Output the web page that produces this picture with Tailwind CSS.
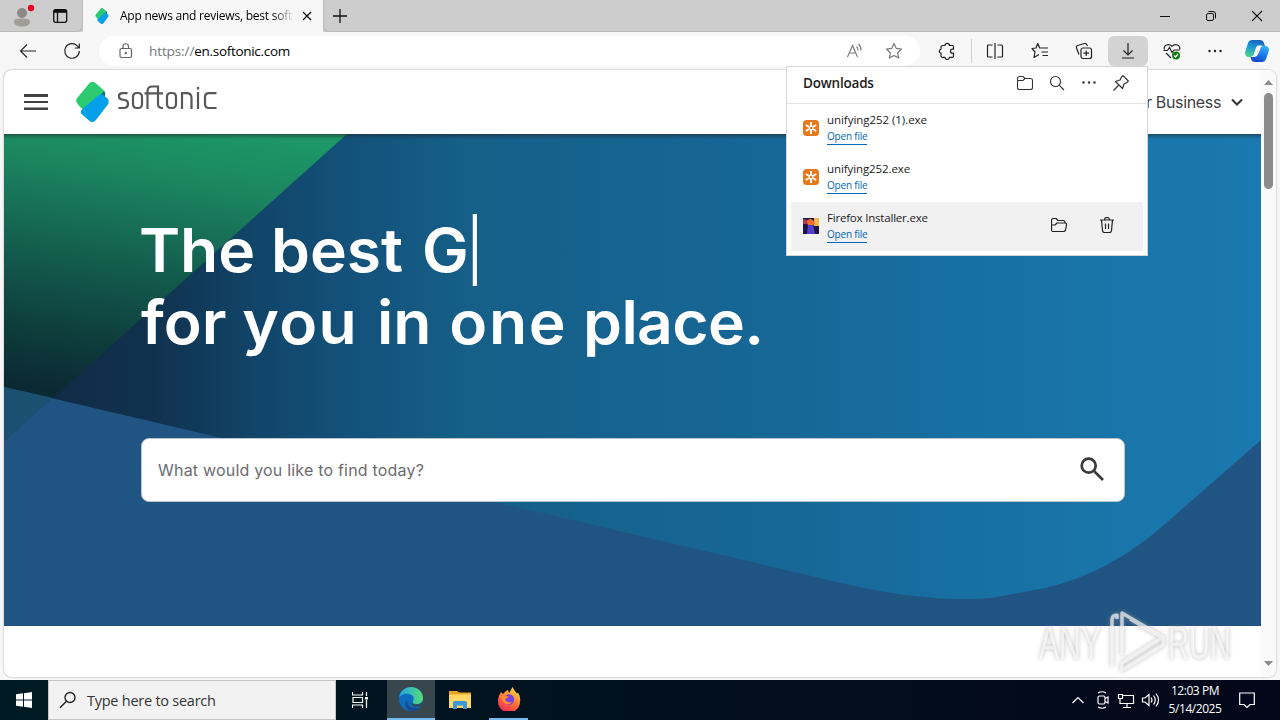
<!DOCTYPE html>
<html lang="en">
<head>
<meta charset="utf-8">
<title>App news and reviews, best software downloads</title>
<script src="https://cdn.jsdelivr.net/npm/@tailwindcss/browser@4"></script>
</head>
<body class="h-[720px] w-[1280px] overflow-hidden bg-[#f7f7f7] font-['Open_Sans',sans-serif] text-[#1b1b1b]">
<div class="relative flex h-[720px] w-[1280px] flex-col">

  <!-- Tab strip -->
  <div class="flex h-8 shrink-0 bg-[#cdcdcd]">
    <div class="flex w-[83px] items-center rounded-br-md border-r border-b border-[#b9b9b9]">
      <svg class="ml-3 h-8 w-6" viewBox="0 0 24 32"><circle cx="10" cy="13" r="5" fill="#8c8986"/><path d="M2 22c0-3 3-3.500 8-3.500s8 .5 8 3.500c0 3-4 4.500-8 4.500s-8-1.500-8-4.500z" fill="#a09c98"/><circle cx="19" cy="8" r="3.200" fill="#e00b1c"/></svg>
      <svg class="ml-4 h-4 w-4" viewBox="0 0 16 16" fill="none" stroke="#111" stroke-width="1.300"><rect x="1.700" y="1.700" width="13" height="12.600" rx="2"/><path d="M1.700 4h13M5.500 4v10" /><path d="M2 3h12.500" stroke-width="2.500"/></svg>
    </div>
    <div class="flex w-[240px] items-center bg-[#f7f7f7]">
      <svg class="ml-3 h-4 w-[14px]" viewBox="76 82 33 40"><use href="#softmark"/></svg>
      <div class="ml-[11px] w-[174px] overflow-hidden bg-gradient-to-r from-black from-88% to-transparent bg-clip-text text-[12px] tracking-[-0.23px] whitespace-nowrap text-transparent">App news and reviews, best softw</div>
      <svg class="ml-[7px] h-3 w-3" viewBox="0 0 12 12" stroke="#111" stroke-width="1.300"><path d="M2 2l8 8M10 2l-8 8"/></svg>
    </div>
    <div class="flex flex-1 items-center rounded-bl-md border-b border-l border-[#b9b9b9]">
      <svg class="ml-2 h-4 w-4" viewBox="0 0 16 16" stroke="#111" stroke-width="1.300"><path d="M1 8h14M8 1v14"/></svg>
      <svg class="ml-auto h-3 w-3" viewBox="0 0 12 12" stroke="#111"><path d="M1 6.500h10"/></svg>
      <svg class="ml-[34px] h-3 w-3" viewBox="0 0 12 12" fill="none" stroke="#111"><rect x="1.500" y="3.500" width="7" height="7" rx="1.500"/><path d="M3.500 1.500h4.500a2.500 2.500 0 0 1 2.500 2.500v4.500"/></svg>
      <svg class="mr-[17px] ml-[34px] h-3 w-3" viewBox="0 0 12 12" stroke="#111" stroke-width="1.100"><path d="M1 1l10 10M11 1L1 11"/></svg>
    </div>
  </div>

  <!-- Toolbar -->
  <div class="flex h-[38px] shrink-0 items-center">
    <svg class="ml-[19px] h-4 w-[18px]" viewBox="0 0 18 16" fill="none" stroke="#222" stroke-width="1.100"><path d="M17 8H1.500M8 1.500L1.500 8 8 14.500"/></svg>
    <svg class="ml-[26px] h-[18px] w-[18px]" viewBox="0 0 18 18" fill="none" stroke="#222" stroke-width="1.200"><path d="M16.300 9a7.300 7.300 0 1 1-2.100-5.200l2 2M16.300 1.500v4.500h-4.500"/></svg>
    <div class="ml-[18px] flex h-[30px] w-[821px] items-center rounded-full bg-white">
      <svg class="ml-5 h-4 w-[14px]" viewBox="0 0 14 16" fill="none" stroke="#666" stroke-width="1.200"><rect x="1" y="5.500" width="11.500" height="9" rx="1.500"/><path d="M4 5.500V3.500a2.700 2.700 0 0 1 5.500 0v2"/><circle cx="6.800" cy="10" r=".6" fill="#666"/></svg>
      <div class="ml-4 text-[13.500px] tracking-[-0.3px] text-black"><span class="tracking-[-0.1px] text-[#767676]">https://</span>en.softonic.com</div>
      <svg class="ml-auto h-[18px] w-[18px]" viewBox="0 0 18 18" fill="none" stroke="#777" stroke-width="1.100"><path d="M1.500 15L6.500 3.500 11.500 15M3.300 11h6.500M10.500 4.500a5 5 0 0 1 1.500 4M12.500 2a8 8 0 0 1 2.500 6.500"/></svg>
      <svg class="mr-[17px] ml-[21px] h-[18px] w-[18px]" viewBox="0 0 18 18" fill="none" stroke="#777" stroke-width="1.200" stroke-linejoin="round"><path d="M9 1.500l2.300 4.900 5.200.7-3.800 3.700.9 5.300L9 13.500l-4.600 2.600.9-5.300L1.500 7.100l5.200-.7z"/></svg>
    </div>
    <svg class="ml-[18px] h-[18px] w-[18px]" viewBox="0 0 18 18" fill="none" stroke="#222" stroke-width="1.200" stroke-linejoin="round"><path d="M4.500 3.500H7a2.200 2.200 0 0 1 4.400 0h2.600a1.500 1.500 0 0 1 1.500 1.500v2.200h-1a2 2 0 0 0 0 4h1v2.600a1.500 1.500 0 0 1-1.500 1.500h-2.600a2.200 2.200 0 0 1-4.400 0H4.500A1.500 1.500 0 0 1 3 13.800v-2.400a2.200 2.200 0 0 1 0-4.300V5a1.500 1.500 0 0 1 1.500-1.500z"/></svg>
    <div class="ml-[15px] h-6 w-px bg-[#cfcfcf]"></div>
    <svg class="ml-[14px] h-[18px] w-[18px]" viewBox="0 0 18 18" fill="none" stroke="#222" stroke-width="1.200"><path d="M6.500 3h-4a1 1 0 0 0-1 1v10a1 1 0 0 0 1 1h4M11.500 3h4a1 1 0 0 1 1 1v10a1 1 0 0 1-1 1h-4M9 1v16"/></svg>
    <svg class="ml-[27px] h-[18px] w-[18px]" viewBox="0 0 18 18" fill="none" stroke="#222" stroke-width="1.200" stroke-linejoin="round"><path d="M10.500 6H8.700L6.800 1.500 5 6l-4 .5 3 3.500-1 5.500 5-3M10.500 6h6.500M10.500 10h6.500M11.500 13.500H17"/></svg>
    <svg class="ml-[26px] h-[18px] w-[18px]" viewBox="0 0 18 18" fill="none" stroke="#222" stroke-width="1.200"><rect x="6" y="6" width="10.500" height="10.500" rx="2"/><path d="M11.200 8.500v5.500M8.500 11.200H14M4 12.500L1.500 6a2 2 0 0 1 1-2.500l7-2a2 2 0 0 1 2.500 1.500l.5 1"/></svg>
    <div class="ml-[15px] flex h-[30px] w-10 items-center justify-center rounded-md bg-[#d3d3d3]"><svg class="h-[18px] w-[18px]" viewBox="0 0 18 18" fill="none" stroke="#222" stroke-width="1.200"><path d="M9 1v12M4.500 8.500L9 13l4.500-4.500M3 16h12"/></svg></div>
    <svg class="ml-[15px] h-[18px] w-[18px]" viewBox="0 0 18 18" fill="none" stroke="#222" stroke-width="1.200"><path d="M1.300 7.500C.5 3 5.500 1 9 4.200 12.500 1 17.500 3 16.700 7.500M.5 8.500h4l2-3 2.500 5 2-2.500h5.500M3 11l5 5"/><circle cx="13" cy="13.500" r="4" fill="#107c10" stroke="none"/><path d="M11 13.500l1.500 1.500 2.500-3" stroke="#fff"/></svg>
    <svg class="ml-[26px] h-4 w-4" viewBox="0 0 16 16" fill="#222"><circle cx="2.500" cy="8" r="1.200"/><circle cx="8" cy="8" r="1.200"/><circle cx="13.500" cy="8" r="1.200"/></svg>
    <svg class="ml-[22px] h-6 w-6" viewBox="0 0 24 24"><use href="#copilot"/></svg>
  </div>

  <!-- Page viewport -->
  <div class="mx-1 flex h-[607px] shrink-0 overflow-hidden rounded-lg bg-white shadow-[0_0_2px_#999]">
    <div class="flex w-[1257px] flex-col">
      <header class="flex h-16 shrink-0 items-center">
        <svg class="ml-5 h-4 w-6" viewBox="0 0 24 16" fill="#414045"><path d="M0 0h24v3H0zM0 7h24v2H0zM0 13.500h24v2.500H0z"/></svg>
        <svg class="ml-7 h-10 w-[33px]" viewBox="76 82 33 40"><g id="softmark"><path d="M89.500 83q3-2.500 6 0l8.500 7.500q2 2 0 3.500l-20 16q-4-2-7-7-2-3 1-6z" fill="#2ccb70"/><path d="M104 91.500q2.500 2 0 6.500l-5-2z" fill="#0b7064"/><path d="M97.500 96q3-3 6-1l4 3.500q2.500 3 0 6.500L95.500 120.500q-3 3-6.500 0l-7.500-6.500q-2-2.500 1-5z" fill="#05a0e9"/></g></svg>
        <svg class="ml-2 h-10 w-[102px]" viewBox="117 82 102 40" fill="none" stroke="#58585a" stroke-width="2.200"><path d="M127.500 93.200h-5q-3.500 0-3.500 3t3 3.300l3 .5q3 .5 3 4t-3.500 4h-6M133 97q0-4 4-4h1q4 0 4 4v7q0 4-4 4h-1q-4 0-4-4zM147.500 109V91q0-4.500 5-4.500h5.500V104q0 4 4 4h1M144.500 93.300H163M167 97q0-4 4-4h1q4 0 4 4v7q0 4-4 4h-1q-4 0-4-4zM182 109V93.200h4.500q5 0 5 4.500V109M198 92v17M198 87v2.500M216.500 93.200H209q-4 0-4 4v6.500q0 4.300 4 4.300h7.500"/></svg>
        <div class="ml-auto flex items-center font-['Inter','Roboto',sans-serif] text-[16px] tracking-[-0.35px] text-[#414045]">For Business<svg class="mr-[18px] ml-[10px] h-3 w-3" viewBox="0 0 12 12" fill="none" stroke="#333" stroke-width="2"><path d="M1 3.500l5 5 5-5"/></svg></div>
      </header>
      <main class="relative h-[492px] shrink-0 overflow-hidden">
        <svg class="absolute inset-0 h-[492px] w-[1257px]" viewBox="4 134 1257 492">
          <defs>
            <linearGradient id="sea" gradientUnits="userSpaceOnUse" x1="60" y1="0" x2="1260" y2="0"><stop offset="0" stop-color="#102b46"/><stop offset=".08" stop-color="#10324f"/><stop offset=".16" stop-color="#114468"/><stop offset=".24" stop-color="#13517a"/><stop offset=".34" stop-color="#155f88"/><stop offset=".6" stop-color="#166797"/><stop offset=".85" stop-color="#1974a8"/><stop offset="1" stop-color="#1a79af"/></linearGradient>
            <linearGradient id="leaf" gradientUnits="userSpaceOnUse" x1="160" y1="120" x2="115" y2="400"><stop offset="0" stop-color="#1c9765"/><stop offset=".18" stop-color="#1c8861"/><stop offset=".5" stop-color="#14604f"/><stop offset=".8" stop-color="#0e3d3c"/><stop offset="1" stop-color="#0b2933"/></linearGradient>
            <linearGradient id="edge" x1="0" y1="0" x2="0" y2="1"><stop offset="0" stop-color="#222" stop-opacity=".5"/><stop offset="1" stop-color="#222" stop-opacity="0"/></linearGradient>
          </defs>
          <path d="M4 134h1257v492H4z" fill="#205482"/>
          <path d="M4 134h1257V440L1165 524Q1110 573 1045 588L992 598Q930 603 850 585L4 387z" fill="url(#sea)"/>
          <path d="M4 134H347L53 398 4 387z" fill="url(#leaf)"/>
          <path d="M4 387l49 11L4 442z" fill="#1c5070"/>
          <path d="M4 134h1257v5H4z" fill="url(#edge)"/>
        </svg>
        <div class="relative pt-20 pl-[137px]">
          <h1 class="origin-left scale-x-[1.04] font-['Inter',sans-serif] text-[60px] leading-[72px] font-semibold whitespace-nowrap text-white"><span class="flex"><span class="-ml-0.5">The best&nbsp;</span><span class="ml-[3px]">G</span><i class="ml-1 h-[72px] w-1 bg-white"></i></span><span class="block">for <span class="tracking-[1.300px]">you</span> <span class="ml-[3px]">in</span> <span class="ml-[2px] tracking-[1.600px]">one</span> <span class="tracking-[-0.6px]">place.</span></span></h1>
          <div class="mt-20 flex h-16 w-[984px] items-center rounded-lg border border-[#bbc4cb] bg-white">
            <span class="ml-4 font-['Inter',sans-serif] text-[16px] tracking-[0.2px] text-[#6b6b70]">What would you like to find today?</span>
            <svg class="mr-5 mb-0.5 ml-auto h-6 w-6" viewBox="0 0 24 24" fill="none" stroke="#3a393d" stroke-width="2.700"><circle cx="8.700" cy="8.700" r="7"/><path d="M14 14l9 9"/></svg>
          </div>
        </div>
      </main>
    </div>
    <div class="relative w-[15px] bg-[#fafafa]">
      <svg class="absolute inset-0 h-[607px] w-[15px]" viewBox="0 0 15 607" fill="#8b8b8b"><path d="M3 15l4.500-5 4.500 5zM3 591l4.500 5 4.500-5z"/><rect x="3" y="23" width="9" height="96" rx="4.500"/></svg>
    </div>
  </div>

  <!-- Windows taskbar -->
  <footer class="mt-auto flex h-10 shrink-0 items-center bg-gradient-to-r from-[#001a24] to-[#030719] text-white">
    <svg class="ml-4 h-4 w-4" viewBox="0 0 16 16" fill="#fff"><path d="M0 2.300l7-1v6.200H0zM8 1.200L16 0v7.500H8zM0 8.500h7v6.200l-7-1zM8 8.500h8V16l-8-1.200z"/></svg>
    <div class="ml-4 flex h-10 w-72 items-center border border-[#c4c4c4] bg-[#f2f2f2]">
      <svg class="ml-[10px] h-[18px] w-[18px]" viewBox="0 0 18 18" fill="none" stroke="#222" stroke-width="1.400"><circle cx="11" cy="6.500" r="5"/><path d="M7.500 10.300L1 16.800"/></svg>
      <span class="ml-[10px] pt-0.5 text-[14.500px] tracking-[-0.25px] text-[#333]">Type here to search</span>
    </div>
    <svg class="ml-4 h-4 w-4" viewBox="0 0 16 16" fill="none" stroke="#fff" stroke-width="1.200"><path d="M.5 0v3h10V0M.5 16v-3h10v3M1 5.500h9.500v5H1zM14.500 0v4M14.500 8v8"/><path d="M13 5h3v2.500h-3z" fill="#fff" stroke="none"/></svg>
    <div class="ml-[19px] flex h-10 w-12 items-center justify-center border-b-2 border-[#76b9ed] bg-[#38474e]"><svg class="h-6 w-6" viewBox="0 0 24 24"><use href="#edgeicon"/></svg></div>
    <svg class="ml-[13px] h-6 w-6" viewBox="0 0 24 24"><use href="#folder"/></svg>
    <div class="ml-[17px] flex h-10 w-[39px] items-center justify-center border-b-2 border-[#76b9ed]"><svg class="h-6 w-6" viewBox="0 0 24 24"><use href="#fox"/></svg></div>
    <svg class="ml-auto h-10 w-[90px]" viewBox="1072 680 90 40" fill="none" stroke="#fff" stroke-width="1.200"><use href="#tray"/></svg>
    <div class="w-[66px] text-center text-[12px] leading-[18px] tracking-[-0.45px]">12:03 PM<br>5/14/2025</div>
    <svg class="mr-[25px] ml-[11px] h-4 w-4" viewBox="0 0 16 16" fill="none" stroke="#fff" stroke-width="1.200"><path d="M.7 1h14.600v11.500H11l-3 3-3-3H.7z"/></svg>
  </footer>

  <svg class="absolute h-0 w-0">
    <defs>
      <linearGradient id="cp" x1=".6" y1="0" x2=".3" y2="1"><stop stop-color="#1763c4"/><stop offset=".5" stop-color="#1e9fd0"/><stop offset="1" stop-color="#4bd38a"/></linearGradient>
      <linearGradient id="cq" x1=".8" y1="0" x2=".4" y2="1"><stop stop-color="#39b4f5"/><stop offset=".5" stop-color="#1b7cf0"/><stop offset="1" stop-color="#1747c9"/></linearGradient>
      <linearGradient id="ff" x1=".8" y1="0" x2=".3" y2="1"><stop stop-color="#ffe34c"/><stop offset=".5" stop-color="#ff7b2e"/><stop offset="1" stop-color="#f2245b"/></linearGradient>
      <linearGradient id="eg" x1="0" y1="0" x2="1" y2="0"><stop stop-color="#21a5e8"/><stop offset="1" stop-color="#55dc75"/></linearGradient>
      <g id="copilot"><path d="M7 1h8q3 0 4 3l1 3h-5q-3 0-4 3l-2 5q-1 3-4 3H3Q-1 17 .500 12l2.500-8q1-3 4-3z" fill="url(#cp)"/><path d="M17 23h-7q-3 0-4-3l-.500-2H8q3 0 4-3l2.500-5q1-3 4-3H21q4 1 2.500 6L21 20q-1 3-4 3z" fill="url(#cq)"/><path d="M12.500 6.500h5q-1.500 1-2 3l-2 5q-1 3-4 3.500H7q1.500-1 2-3l1.500-5q.5-2.500 2-3.500z" fill="#f7f7f7"/></g>
      <g id="edgeicon"><circle cx="12" cy="12" r="12" fill="#0f6cbd"/><path d="M0 11C1 4 6 0 12 0c7 0 12 5 12 11 0 4-3 6-7 6-3 0-4-1-3-3 2-3 0-6-4-7-4-1-9 1-10 4z" fill="url(#eg)"/><path d="M8.500 12c-1.500 5 2.500 9 7.500 9 3 0 5-1 6-2-2 3-5 5-9 5C7 23 4 17 8.500 12z" fill="#174a91"/><path d="M13.500 14c-1 2 .5 3.500 4 3.500 2 0 4-.5 5.500-2l-1 3q-3 2-7 1-4-2-1.500-5.500z" fill="#38474e"/></g>
      <g id="folder"><path d="M1 3h8l2 1.500h12V20H1z" fill="#e9a51f"/><path d="M1 6.500h22V20H1z" fill="#ffd867"/><path d="M5 21v-6q0-2 2-2h10q2 0 2 2v6h-4v-3.500H9V21z" fill="#3b97d7"/></g>
      <g id="fox"><path d="M4 5l2 2q2-3 5-4l1 3q2-3 3.500-6 2 4 4.500 6.500l1-1q3 5 2 9a11 11 0 0 1-22 0Q1 9 4 5z" fill="url(#ff)"/><circle cx="12" cy="12.500" r="5.200" fill="#7542e5"/><path d="M3 9q5-2 9 1l-4 2q1 4 7 3-3 4-8 1z" fill="#ff8c31"/></g>
      <g id="tray"><path d="M1072.500 703l5.500-5.500 5.500 5.500M1098 693q4-2.500 8 0M1098 707q4 2.500 8 0"/><rect x="1098" y="696" width="7" height="8" rx="1.500"/><path d="M1105 698.500l3-1.500v6l-3-1.500M1123 695.500h10.500v8H1120v-5M1127 704v3M1123 707.500h8M1118.500 694.500h4v4h-4zM1142.500 698h2.500l4-3.500v11l-4-3.500h-2.500zM1151 697.500q2 2.500 0 5M1153.500 695.500q3.500 4.500 0 9M1156 693.500q5 6.500 0 13"/></g>
    </defs>
  </svg>

  <!-- Downloads flyout -->
  <section class="absolute top-[66px] left-[786px] h-[190px] w-[362px] border border-[#d5d5d5] bg-white">
    <div class="flex h-[37px] items-center border-b border-[#e5e5e5] pr-[18px] pb-[3px] pl-4">
      <h2 class="text-[13.500px] font-semibold tracking-[-0.2px]">Downloads</h2>
      <div class="-mt-0.5 ml-auto flex gap-4 text-[#333]">
        <svg class="h-4 w-4" viewBox="0 0 16 16" fill="none" stroke="currentColor" stroke-width="1.100"><path d="M2.500 1.500h3.500l2 2h5.500a2 2 0 0 1 2 2v7a2 2 0 0 1-2 2h-11a2 2 0 0 1-2-2v-9a2 2 0 0 1 2-2zM.5 5.500H6l2-2"/></svg>
        <svg class="h-4 w-4" viewBox="0 0 16 16" fill="none" stroke="currentColor" stroke-width="1.100"><circle cx="6.500" cy="6.500" r="5"/><path d="M10.200 10.200l4.800 4.800"/></svg>
        <svg class="h-4 w-4" viewBox="0 0 16 16" fill="currentColor"><circle cx="2.500" cy="7.500" r="1.200"/><circle cx="8" cy="7.500" r="1.200"/><circle cx="13.500" cy="7.500" r="1.200"/></svg>
        <svg class="h-4 w-4" viewBox="0 0 16 16" fill="none" stroke="currentColor" stroke-width="1.200" stroke-linejoin="round"><path d="M10 .700l5.300 5.300-1.300 1.500-3 1.500-1.500 4.500-7-7L7 5l1.500-3zM5.500 10.500L.5 15.500"/></svg>
      </div>
    </div>
    <div class="mx-1 flex flex-col">
      <div class="flex h-[49px] items-center pb-px pl-3"><svg class="h-4 w-4" viewBox="0 0 16 16"><g id="gear"><rect width="16" height="16" rx="3.500" fill="#e47a1c"/><path d="M8 2v12M2.800 5l10.400 6M2.800 11l10.400-6" stroke="#fff" stroke-width="2"/><circle cx="8" cy="8" r="1.200" fill="#e47a1c"/></g></svg>
        <div class="ml-2 flex flex-col items-start"><span class="text-[11.500px] leading-4 tracking-[-0.05px]">unifying252 (1).exe</span><span class="border-b border-[#0067b8] pt-px text-[10px] leading-[15px] tracking-[-0.2px] text-[#0067b8]">Open file</span></div></div>
      <div class="flex h-[49px] items-center pb-px pl-3"><svg class="h-4 w-4" viewBox="0 0 16 16"><use href="#gear"/></svg>
        <div class="ml-2 flex flex-col items-start"><span class="text-[11.500px] leading-4 tracking-[-0.1px]">unifying252.exe</span><span class="border-b border-[#0067b8] pt-px text-[10px] leading-[15px] tracking-[-0.2px] text-[#0067b8]">Open file</span></div></div>
      <div class="flex h-[49px] items-center bg-[#f1f1f1] pr-7 pb-px pl-3"><svg class="h-4 w-4" viewBox="0 0 16 16"><path d="M0 0h16v16H0z" fill="#1f1645"/><path d="M0 1l5 1v4H0z" fill="#a83a50"/><path d="M11 0h5v8h-5z" fill="#f6b64a"/><path d="M4 3q4-5 8 2l-2 3H5z" fill="#f46a35"/><path d="M5 7h5l2 9H4z" fill="#5341ce"/></svg>
        <div class="ml-2 flex flex-col items-start"><span class="text-[11.500px] leading-4 tracking-[-0.2px]">Firefox Installer.exe</span><span class="border-b border-[#0067b8] pt-px text-[10px] leading-[15px] tracking-[-0.2px] text-[#0067b8]">Open file</span></div>
        <svg class="mb-0.5 ml-auto h-4 w-4" viewBox="0 0 16 16" fill="none" stroke="#222" stroke-width="1.200" stroke-linejoin="round"><path d="M2 14.500q-1.500 0-1.500-2v-9q0-2 2-2H5l2 2h5q2 0 2 2V6H6L4 8H.5M2 14.500h10.500q1.500 0 2-1.500l1-5q.3-2-1.500-2"/></svg>
        <svg class="mb-0.5 ml-8 h-4 w-4" viewBox="0 0 16 16" fill="none" stroke="#222" stroke-width="1.200"><path d="M1 3h14M5.500 3q0-2.500 2.500-2.500T10.500 3M2.500 3l1 10.500q.2 2 2 2h5q1.800 0 2-2l1-10.500M6.500 6.500v5.500M9.500 6.500v5.500"/></svg>
      </div>
    </div>
  </section>

  <!-- Recording watermark -->
  <div class="absolute top-[608px] left-[1036px] drop-shadow-[0_0_2px_#999]">
    <svg class="h-[68px] w-[200px]" viewBox="1036 608 200 68"><g fill="none" stroke="#fff" stroke-opacity=".65" stroke-width="3.500" stroke-linejoin="round"><path d="M1112 666v-46q0-5 5-5v4M1122 655v-42l41 24-41 26v7l41-25v-7L1130 619"/></g><g font-family="Liberation Sans" font-size="46" fill="#fff" fill-opacity=".65"><text x="1039" y="659" textLength="62" lengthAdjust="spacingAndGlyphs">ANY</text><text x="1168" y="659" textLength="63" lengthAdjust="spacingAndGlyphs">RUN</text></g></svg>
  </div>
</div>
</body>
</html>
